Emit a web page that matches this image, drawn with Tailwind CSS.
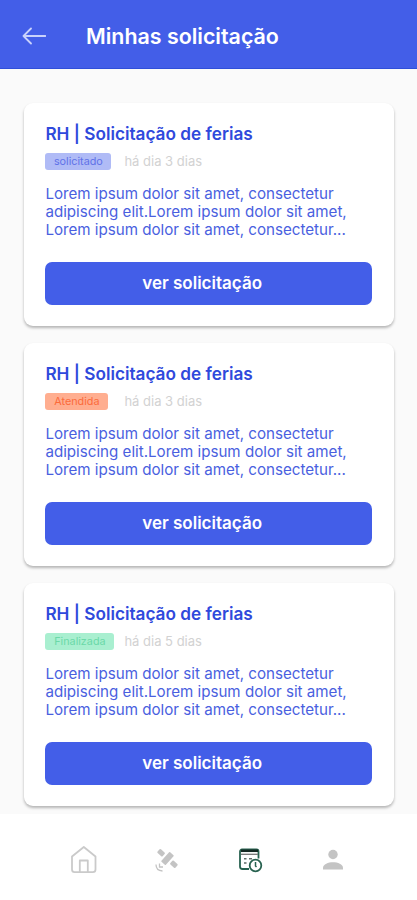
<!DOCTYPE html>
<html lang="pt-BR">
<head>
<meta charset="utf-8">
<meta name="viewport" content="width=device-width, initial-scale=1">
<title>Minhas solicitação</title>
<script src="https://cdn.jsdelivr.net/npm/@tailwindcss/browser@4"></script>
</head>
<body class="flex h-[900px] w-[417px] flex-col overflow-hidden bg-[#fafafa] font-['Inter',sans-serif]">
<header class="flex h-[69px] shrink-0 items-center border-b border-[#2f4fd9] bg-[#435ee8] pt-[3px] pl-[22px] text-white">
  <svg class="h-5 w-6 shrink-0 text-[#c9d2fb]" viewBox="0 0 24 20" fill="none" stroke="currentColor" stroke-width="1.8" stroke-linecap="round" stroke-linejoin="round"><path d="M23.500 10H1.500M9 2.500L1.500 10l7.500 7.500"/></svg>
  <h1 class="ml-10 text-[21.400px] leading-7 font-semibold whitespace-nowrap"><span>Minhas solicitação</span></h1>
</header>
<main class="flex grow flex-col gap-[17px] px-6 pt-[34px] pr-[23px]">
  <article class="h-[223px] shrink-0 rounded-[9px] bg-white px-[21.4px] pt-[20px] shadow-[0_2px_3px_rgba(0,0,0,0.28)]">
    <h2 class="text-[17.2px] leading-[22px] font-semibold whitespace-nowrap text-[#2f49dc]"><span>RH | Solicitação de ferias</span></h2>
    <div class="mt-[8px] flex h-[17px] items-center">
      <span class="flex h-[17px] w-[66px] items-center justify-center rounded-[3px] bg-[#b0bbf6] pt-[2px] text-[10.8px] text-[#6072e8]"><span>solicitado</span></span>
      <span class="ml-[13px] text-[13px] text-[#d2d2d2]">há dia 3 dias</span>
    </div>
    <p class="mt-[15px] text-[15.150px] leading-[18px] whitespace-nowrap text-[#4a5fe0]"><span>Lorem ipsum dolor sit amet, consectetur</span><br><span>adipiscing elit.Lorem ipsum dolor sit amet,</span><br><span>Lorem ipsum dolor sit amet, consectetur...</span></p>
    <button class="mt-[23px] flex h-[43px] w-[326.5px] items-center justify-center rounded-[7px] bg-[#435ee8] pr-[13px] pt-px text-[17px] font-semibold text-white"><span>ver solicitação</span></button>
  </article>
  <article class="h-[223px] shrink-0 rounded-[9px] bg-white px-[21.4px] pt-[20px] shadow-[0_2px_3px_rgba(0,0,0,0.28)]">
    <h2 class="text-[17.2px] leading-[22px] font-semibold whitespace-nowrap text-[#2f49dc]"><span>RH | Solicitação de ferias</span></h2>
    <div class="mt-[8px] flex h-[17px] items-center">
      <span class="flex h-[17px] w-[63px] items-center justify-center rounded-[3px] bg-[#ffae90] pt-[2px] text-[10.8px] text-[#fb6b3b]"><span>Atendida</span></span>
      <span class="ml-[16px] text-[13px] text-[#d2d2d2]">há dia 3 dias</span>
    </div>
    <p class="mt-[15px] text-[15.150px] leading-[18px] whitespace-nowrap text-[#4a5fe0]"><span>Lorem ipsum dolor sit amet, consectetur</span><br><span>adipiscing elit.Lorem ipsum dolor sit amet,</span><br><span>Lorem ipsum dolor sit amet, consectetur...</span></p>
    <button class="mt-[23px] flex h-[43px] w-[326.5px] items-center justify-center rounded-[7px] bg-[#435ee8] pr-[13px] pt-px text-[17px] font-semibold text-white"><span>ver solicitação</span></button>
  </article>
  <article class="h-[223px] shrink-0 rounded-[9px] bg-white px-[21.4px] pt-[20px] shadow-[0_2px_3px_rgba(0,0,0,0.28)]">
    <h2 class="text-[17.2px] leading-[22px] font-semibold whitespace-nowrap text-[#2f49dc]"><span>RH | Solicitação de ferias</span></h2>
    <div class="mt-[8px] flex h-[17px] items-center">
      <span class="flex h-[17px] w-[69px] items-center justify-center rounded-[3px] bg-[#a9efd0] pt-[2px] text-[10.8px] text-[#6bd9a8]"><span>Finalizada</span></span>
      <span class="ml-[10px] text-[13px] text-[#d2d2d2]">há dia 5 dias</span>
    </div>
    <p class="mt-[15px] text-[15.150px] leading-[18px] whitespace-nowrap text-[#4a5fe0]"><span>Lorem ipsum dolor sit amet, consectetur</span><br><span>adipiscing elit.Lorem ipsum dolor sit amet,</span><br><span>Lorem ipsum dolor sit amet, consectetur...</span></p>
    <button class="mt-[23px] flex h-[43px] w-[326.5px] items-center justify-center rounded-[7px] bg-[#435ee8] pr-[13px] pt-px text-[17px] font-semibold text-white"><span>ver solicitação</span></button>
  </article>
</main>
<nav class="flex h-[86px] shrink-0 items-center justify-between bg-white px-[69px] pt-[5px]">
  <svg class="size-[30px] text-[#cacaca]" viewBox="0 0 30 30" fill="none" stroke="currentColor" stroke-width="1.8" stroke-linejoin="round"><path d="M3 11.500L14.800 2l11.700 9.500v13a2.600 2.600 0 0 1-2.600 2.600H5.600A2.600 2.600 0 0 1 3 24.500zM10.800 27V15.500h8V27"/></svg>
  <svg class="size-[30px] text-[#c4c4c4]" viewBox="0 0 30 30" fill="currentColor"><g transform="translate(15.500 13.500) rotate(42)"><rect x="-12" y="-2.500" width="6.800" height="5" rx="1"/><rect x="-3" y="-6.500" width="6" height="13" rx=".8"/><rect x="5.200" y="-2.500" width="6.800" height="5" rx="1"/></g><path d="M7.500 18.500v3.500h3.500M4 19.500c0 4 2.500 6.300 6.500 6.500" fill="none" stroke="currentColor" stroke-width="1.300"/></svg>
  <svg class="size-[30px] text-[#286250]" viewBox="0 0 30 30" fill="none" stroke="currentColor" stroke-width="1.800"><path d="M14 24H7.500A2.500 2.500 0 0 1 5 21.500V6.500A2 2 0 0 1 7 4.500h14.500a2 2 0 0 1 2 2V13.500"/><path d="M6 9.300h17" stroke="#777777" stroke-width="1.300"/><path d="M9 13.800h2.500M14 13.800h3M9 18h2.500" stroke="#606c68" stroke-width="1.600"/><path d="M6 5.800h17" stroke="#142822" stroke-width="2.500"/><circle cx="20.500" cy="20.500" r="5.800"/><path d="M20.500 17v4l1 1" stroke-width="1.500"/></svg>
  <svg class="size-[30px] text-[#c4c4c4]" viewBox="0 0 30 30" fill="currentColor"><circle cx="15" cy="9.500" r="4.700"/><path d="M5 24.500v-1.500c0-3.900 5.300-5.700 10-5.700s10 1.800 10 5.700v1.500z"/></svg>
</nav>
</body>
</html>
